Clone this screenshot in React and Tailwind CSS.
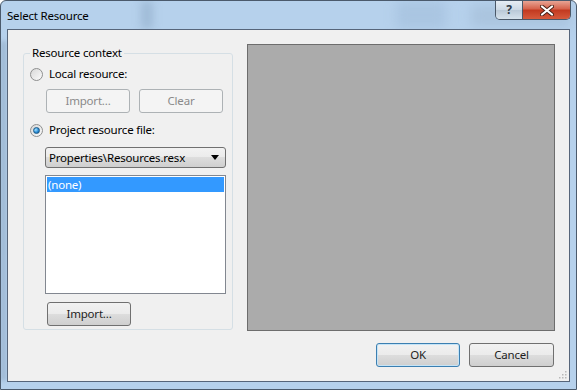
import React from 'react';

const font = { fontFamily: '"Noto Sans", "Open Sans", sans-serif' };

const Radio = ({ checked }) => (
  <span className="relative flex h-[13px] w-[13px] shrink-0 items-center justify-center rounded-full border border-[#8e8f8f] bg-gradient-to-br from-[#d8d8d8] to-[#fbfbfb]">
    {checked && (
      <span className="h-[7px] w-[7px] rounded-full border border-[#1c5a88] bg-[radial-gradient(circle_at_35%_35%,#a6e3ff,#2a8ed8_55%,#0f4f86)]" />
    )}
  </span>
);

const Button = ({ children, disabled, focused, className = '' }) => (
  <div
    className={
      'flex h-[24px] items-center justify-center rounded-[3px] border text-[11.5px] tracking-[-0.2px] ' +
      (disabled
        ? 'border-[#adb2b5] bg-[#f4f4f4] text-[#8a8a8a] '
        : focused
        ? 'border-[#3c7fb1] bg-[linear-gradient(#f2f2f2_0%,#ebebeb_50%,#dddddd_50%,#cfcfcf_100%)] text-[#1e1e1e] shadow-[inset_0_0_0_1px_#c5e4f7] '
        : 'border-[#707070] bg-[linear-gradient(#f2f2f2_0%,#ebebeb_50%,#dddddd_50%,#cfcfcf_100%)] text-[#1e1e1e] ') +
      className
    }
  >
    {children}
  </div>
);

export default function App() {
  return (
    <div style={font} className="relative flex h-[390px] w-[577px] flex-col overflow-hidden rounded-t-[6px] border border-[#4b5a6c] bg-[#b6d1ec]">
      {/* glass blur behind title bar */}
      <span className="pointer-events-none absolute left-[140px] top-0 h-[28px] w-[12px] bg-[#8aa6c2] opacity-50 blur-[4px]" />
      <span className="pointer-events-none absolute left-[395px] top-0 h-[28px] w-[50px] bg-[#a2bedb] opacity-60 blur-[6px]" />
      <span className="pointer-events-none absolute left-[470px] top-[4px] h-[22px] w-[100px] bg-[#9fb8d1] opacity-50 blur-[6px]" />
      <span className="pointer-events-none absolute left-0 top-[40px] h-[340px] w-[5px] bg-[#8aa4c0] opacity-60 blur-[2px]" />

      {/* title bar */}
      <div className="relative flex h-[28px] shrink-0 items-start">
        <span className="ml-[6px] mt-[6px] text-[11.5px] tracking-[-0.2px] text-black">Select Resource</span>
        <div className="ml-auto mr-[5px] flex h-[19px] overflow-hidden rounded-b-[5px] border border-t-0 border-[#4a5868]">
          <div className="flex w-[27px] items-center justify-center border-r border-[#4a5868] bg-[linear-gradient(#e6edf4_0%,#ccd8e4_50%,#b9c8d6_50%,#d6e2ec_100%)] text-[12px] font-bold text-[#2f3b48]">
            ?
          </div>
          <div className="flex w-[47px] items-center justify-center bg-[linear-gradient(#e8a494_0%,#d5614a_45%,#c2391f_50%,#d65a3c_100%)]">
            <svg width="14" height="11" viewBox="0 0 14 11">
              <path d="M2 1.5 L12 9.5 M12 1.5 L2 9.5" stroke="#4a2116" strokeWidth="4" strokeLinecap="round" />
              <path d="M2 1.5 L12 9.5 M12 1.5 L2 9.5" stroke="#ffffff" strokeWidth="2.2" strokeLinecap="round" />
            </svg>
          </div>
        </div>
      </div>

      {/* client area */}
      <div className="relative mx-[6px] mb-[7px] flex flex-1 flex-col border border-[#56657a] bg-[#f0f0f0] text-[11.5px] tracking-[-0.2px]">
        <div className="mt-[14px] flex items-start">
          <fieldset className="ml-[15px] mt-[2px] h-[284px] w-[210px] rounded-[3px] border border-[#d5dfe5] px-0 pb-0">
            <legend className="ml-[6px] px-[2px] leading-[14px] text-black">Resource context</legend>
            <div className="ml-[6px] mt-[6px] flex h-[16px] items-center gap-[6px] text-black">
              <Radio />
              <span>Local resource:</span>
            </div>
            <div className="ml-[22px] mt-[7px] flex gap-[9px]">
              <Button disabled className="w-[84px]">Import...</Button>
              <Button disabled className="w-[84px]">Clear</Button>
            </div>
            <div className="ml-[6px] mt-[9px] flex h-[16px] items-center gap-[6px] text-black">
              <Radio checked />
              <span>Project resource file:</span>
            </div>
            <div className="ml-[21px] mt-[9px] flex h-[21px] w-[181px] items-center rounded-[3px] border border-[#707070] bg-[linear-gradient(#f2f2f2_0%,#ebebeb_50%,#dddddd_50%,#cfcfcf_100%)] pl-[3px] pr-[6px] text-black">
              <span className="flex-1">Properties\Resources.resx</span>
              <svg width="8" height="5" viewBox="0 0 8 5">
                <path d="M0 0 L8 0 L4 5 Z" fill="#000" />
              </svg>
            </div>
            <div className="ml-[21px] mt-[7px] h-[119px] w-[181px] border border-[#828790] bg-white p-[1px]">
              <div className="h-[15px] bg-[#3399ff] pl-[1px] leading-[15px] text-white">(none)</div>
            </div>
            <Button className="ml-[23px] mt-[8px] w-[84px]">Import...</Button>
          </fieldset>
          <div className="ml-[14px] h-[287px] w-[308px] border border-[#6d6d6d] bg-[#ababab]" />
        </div>
        <div className="mt-[12px] flex justify-end gap-[9px] pr-[15px]">
          <Button focused className="w-[84px]">OK</Button>
          <Button className="w-[85px]">Cancel</Button>
        </div>
        <svg className="absolute bottom-[2px] right-[2px]" width="10" height="10" viewBox="0 0 10 10">
          <g fill="#b8b8b8">
            <rect x="8" y="2" width="1.5" height="1.5" />
            <rect x="5" y="5" width="1.5" height="1.5" />
            <rect x="8" y="5" width="1.5" height="1.5" />
            <rect x="2" y="8" width="1.5" height="1.5" />
            <rect x="5" y="8" width="1.5" height="1.5" />
            <rect x="8" y="8" width="1.5" height="1.5" />
          </g>
        </svg>
      </div>
    </div>
  );
}
